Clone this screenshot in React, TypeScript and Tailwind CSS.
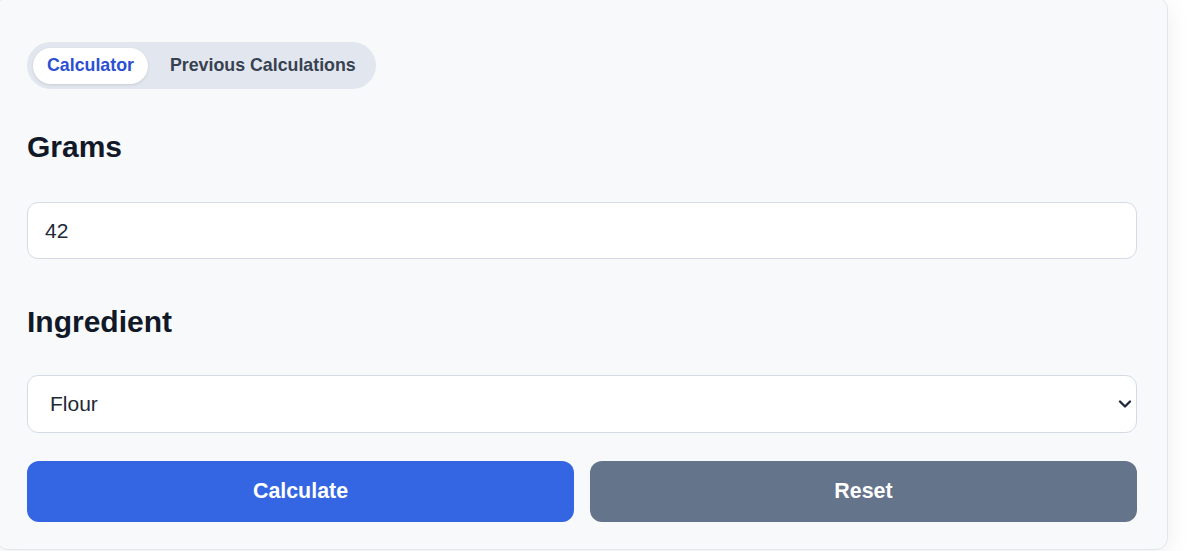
import React, { useState } from "react";

const ChevronDown = () => (
  <svg
    className="pointer-events-none absolute right-[5px] top-1/2 -translate-y-1/2"
    width="14"
    height="9"
    viewBox="0 0 14 9"
    fill="none"
  >
    <path
      d="M2 2l5 5 5-5"
      stroke="#1f2937"
      strokeWidth="2.4"
      strokeLinecap="round"
      strokeLinejoin="round"
    />
  </svg>
);

const App = () => {
  const [tab, setTab] = useState("calculator");
  const [grams, setGrams] = useState("42");
  const [ingredient, setIngredient] = useState("Flour");

  return (
    <div className="min-h-screen bg-white overflow-hidden font-['Liberation_Sans',Arial,sans-serif]">
      <div
        className="-ml-[4px] -mt-[3px] w-[1172px] rounded-[12px] border border-[#e3e6ec]
        bg-[#f8f9fb] px-[30px] pt-[44px] pb-[27px] shadow-[0_6px_24px_rgba(15,23,42,0.07)]"
      >
        <div className="mb-[41px] flex">
          <div className="flex h-[47px] items-center gap-[8px] rounded-full bg-[#e2e7ef] px-[6px]">
            <button
              onClick={() => setTab("calculator")}
              className={
                tab === "calculator"
                  ? "h-[36px] rounded-full bg-white px-[14px] text-[17.8px] font-bold text-[#2b4fd3] shadow-[0_1px_3px_rgba(0,0,0,0.12)]"
                  : "h-[36px] rounded-full px-[14px] text-[17.8px] font-bold text-[#374151]"
              }
            >
              Calculator
            </button>
            <button
              onClick={() => setTab("previous")}
              className={
                tab === "previous"
                  ? "h-[36px] rounded-full bg-white px-[14px] text-[17.8px] font-bold text-[#2b4fd3] shadow-[0_1px_3px_rgba(0,0,0,0.12)]"
                  : "h-[36px] rounded-full px-[14px] text-[17.8px] font-bold text-[#374151]"
              }
            >
              Previous Calculations
            </button>
          </div>
        </div>

        <h2 className="mb-[38px] h-[34px] text-[30px] leading-[34px] font-bold text-[#111827]">
          Grams
        </h2>
        <input
          type="number"
          value={grams}
          onChange={(e) => setGrams(e.target.value)}
          className="mb-[46px] block h-[57px] w-full rounded-[11px] border border-[#d5dbe6] bg-white px-[17px]
          text-[21px] text-[#1f2937] outline-none [appearance:textfield]"
        />

        <h2 className="mb-[36px] h-[34px] text-[30px] leading-[34px] font-bold text-[#111827]">
          Ingredient
        </h2>
        <div className="relative">
          <select
            value={ingredient}
            onChange={(e) => setIngredient(e.target.value)}
            className="block h-[58px] w-full appearance-none rounded-[11px] border border-[#d5dbe6] bg-white pl-[22px]
            pr-[30px] text-[21px] text-[#1f2937] outline-none"
          >
            <option>Flour</option>
            <option>Sugar</option>
            <option>Butter</option>
            <option>Rice</option>
          </select>
          <ChevronDown />
        </div>

        <div className="mt-[28px] flex gap-[16px]">
          <button className="h-[61px] flex-1 rounded-[12px] bg-[#3466e4] text-[21.4px] font-bold text-white">
            Calculate
          </button>
          <button
            onClick={() => {
              setGrams("");
              setIngredient("Flour");
            }}
            className="h-[61px] flex-1 rounded-[12px] bg-[#64748b] text-[21.4px] font-bold text-white"
          >
            Reset
          </button>
        </div>
      </div>
    </div>
  );
};

export default App;
